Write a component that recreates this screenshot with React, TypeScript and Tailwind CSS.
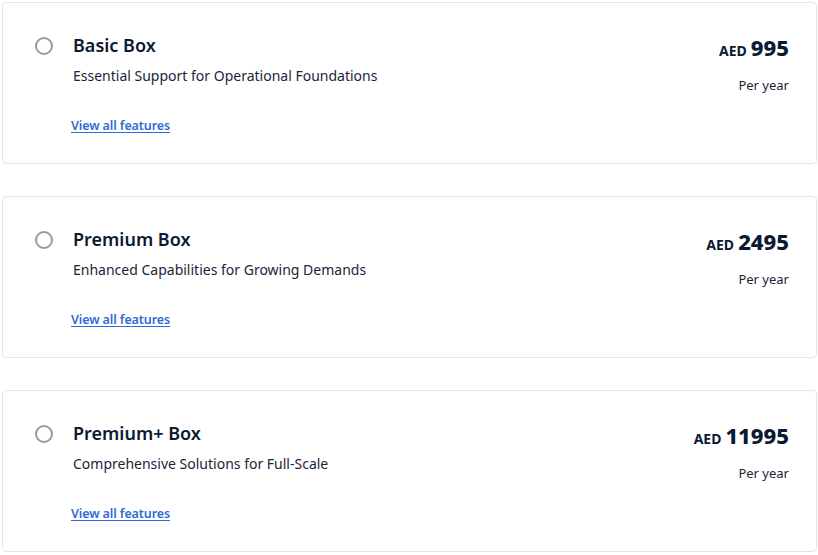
const plans = [
  { name: "Basic Box", tagline: "Essential Support for Operational Foundations", price: "995" },
  { name: "Premium Box", tagline: "Enhanced Capabilities for Growing Demands", price: "2495" },
  { name: "Premium+ Box", tagline: "Comprehensive Solutions for Full-Scale", price: "11995" },
];

export default function App() {
  return (
    <div
      className="flex w-[818px] flex-col gap-[32px] bg-white pl-[2px] pr-[1px] pt-[2px]"
      style={{ fontFamily: '"Noto Sans", "Open Sans", sans-serif' }}
    >
      {plans.map((p) => (
        <div
          key={p.name}
          className="flex h-[162px] justify-between rounded-[4px] border border-[#e3e5e8] bg-white pl-[32px] pr-[27px] pt-[30px]"
        >
          <div className="flex gap-[20px]">
            <span className="mt-[4px] h-[18px] w-[18px] shrink-0 rounded-full border-2 border-[#9a9a9a]" />
            <div className="flex flex-col">
              <h3 className="text-[18px] font-semibold leading-[24px] text-[#0b1a33]">{p.name}</h3>
              <p className="mt-[9px] text-[14px] leading-[20px] text-[#1b2538]">{p.tagline}</p>
              <a
                href="#"
                className="-ml-[2px] mt-[31px] w-fit text-[12.5px] font-semibold leading-[18px] tracking-[-0.1px] text-[#2f6bd3] underline underline-offset-2"
              >
                View all features
              </a>
            </div>
          </div>
          <div className="-mt-[1px] flex flex-col items-end">
            <div className="flex items-baseline gap-[4px] text-[#0b1a33]">
              <span className="text-[14px] font-bold">AED</span>
              <span className="text-[22px] font-extrabold leading-[30px]">{p.price}</span>
            </div>
            <span className="mt-[14px] text-[13px] leading-[18px] text-[#1b2538]">Per year</span>
          </div>
        </div>
      ))}
    </div>
  );
}
